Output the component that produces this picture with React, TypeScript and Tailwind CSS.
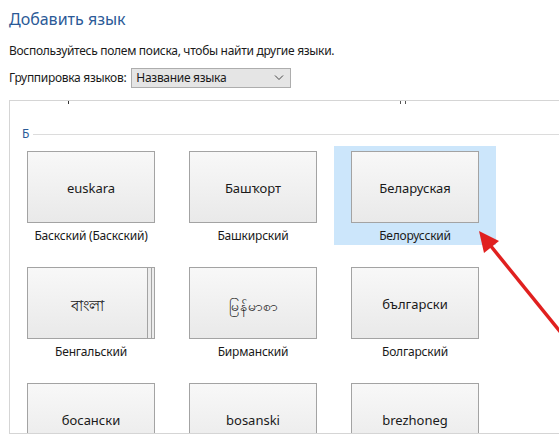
import React from "react";

type Lang = { native: string; name: string; selected?: boolean; stacked?: boolean; size?: string };

const rows: Lang[][] = [
  [
    { native: "euskara", name: "Баскский (Баскский)" },
    { native: "Башҡорт", name: "Башкирский" },
    { native: "Беларуская", name: "Белорусский", selected: true },
  ],
  [
    { native: "বাংলা", name: "Бенгальский", stacked: true, size: "text-[15px]" },
    { native: "မြန်မာစာ", name: "Бирманский", size: "text-[14px]" },
    { native: "български", name: "Болгарский" },
  ],
  [
    { native: "босански", name: "" },
    { native: "bosanski", name: "" },
    { native: "brezhoneg", name: "" },
  ],
];

const face = "bg-gradient-to-b from-[#f8f8f8] to-[#e9e9e9] border border-[#a3a3a3]";

function Tile({ lang }: { lang: Lang }) {
  const text = `flex items-center justify-center ${lang.size ?? "text-[13px]"} text-[#1a1a1a] pt-[4px]`;
  return (
    <div
      className={`w-[162px] h-[99px] px-[17px] pt-[5px] flex flex-col ${
        lang.selected ? "bg-[#cce6fb]" : ""
      }`}
    >
      {lang.stacked ? (
        <div className="flex h-[72px]">
          <div className={`w-[121px] h-full ${face} ${text}`}>{lang.native}</div>
          <div className="w-[4px] h-full border-y border-r border-[#a3a3a3] bg-[#ececec]" />
          <div className="w-[3px] h-full border-y border-r border-[#a3a3a3] bg-[#ececec]" />
        </div>
      ) : (
        <div className={`w-[128px] h-[72px] ${face} ${text}`}>{lang.native}</div>
      )}
      <div className="h-[22px] flex items-center justify-center text-[12px] tracking-[-0.2px] text-[#1a1a1a] pt-[4px]">
        {lang.name}
      </div>
    </div>
  );
}

export default function App() {
  return (
    <div
      className="relative w-[559px] h-[437px] overflow-hidden bg-white text-[#1a1a1a]"
      style={{ fontFamily: '"Noto Sans", "Open Sans", sans-serif' }}
    >
      {/* Heading */}
      <div className="h-[38px] pl-[9px] flex items-center text-[16px] text-[#2b5a97]">Добавить язык</div>
      <div className="h-[26px] pl-[9px] flex items-center text-[12px] tracking-[-0.3px]">
        Воспользуйтесь полем поиска, чтобы найти другие языки.
      </div>

      {/* Grouping selector */}
      <div className="mt-[2px] h-[23px] pl-[9px] flex items-center gap-[5px] text-[12px] tracking-[-0.3px]">
        <span>Группировка языков:</span>
        <div className="w-[160px] h-[20px] bg-[#e5e5e5] border border-[#adadad] flex items-center justify-between pl-[4px] pr-[6px]">
          <span>Название языка</span>
          <svg width="10" height="6" viewBox="0 0 10 6" fill="none" stroke="#444" strokeWidth="1">
            <path d="M1 0.5 L5 4.5 L9 0.5" />
          </svg>
        </div>
      </div>

      {/* Language list */}
      <div className="mt-[11px] ml-[9px] h-[334px] border-l border-y border-[#d5d5d5] overflow-hidden">
        <div className="h-[3px] relative">
          <div className="absolute left-[58px] top-0 w-px h-[3px] bg-[#333]" />
          <div className="absolute left-[390px] top-0 w-px h-[3px] bg-[#555]" />
          <div className="absolute left-[395px] top-0 w-px h-[3px] bg-[#555]" />
        </div>
        <div className="mt-[20px] h-[20px] flex items-center pl-[12px] gap-[4px]">
          <span className="text-[12px] text-[#2b5a97]">Б</span>
          <div className="flex-1 h-px bg-[#dcdcdc]" />
        </div>
        <div className="mt-[2px] flex flex-col gap-[17px]">
          {rows.map((row, i) => (
            <div key={i} className="flex">
              {row.map((l) => (
                <Tile key={l.native} lang={l} />
              ))}
            </div>
          ))}
        </div>
      </div>

      {/* Pointer arrow */}
      <svg className="absolute left-0 top-0 pointer-events-none" width="559" height="437">
        <line x1="562" y1="334" x2="490" y2="245" stroke="#e0201f" strokeWidth="3.5" />
        <polygon points="479,231 499,241 484,253" fill="#e0201f" />
      </svg>
    </div>
  );
}
